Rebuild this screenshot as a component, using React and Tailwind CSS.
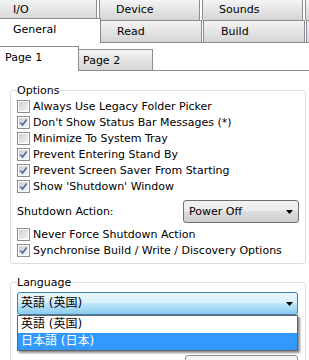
import React from 'react';

const tabGradient = 'bg-gradient-to-b from-[#f4f4f4] to-[#d5d5d5]';

const Arrow = () => (
  <svg width="7" height="4" viewBox="0 0 7 4" className="shrink-0">
    <path d="M0 0h7L3.5 4z" fill="#000" />
  </svg>
);

const Check = ({ checked }) => (
  <span className="flex h-[13px] w-[13px] shrink-0 border border-[#8e8f8f] bg-white p-[1px]">
    <span className="flex h-full w-full items-center justify-center bg-gradient-to-br from-[#cbcdd0] to-[#f7f7f7]">
      {checked && (
        <svg width="9" height="9" viewBox="0 0 9 9">
          <path d="M1.5 4.5 L3.6 7 L7.6 1.6" fill="none" stroke="#4a67ad" strokeWidth="1.6" />
        </svg>
      )}
    </span>
  </span>
);

const Row = ({ checked, children, className = '' }) => (
  <div className={`flex h-[16px] items-center gap-[3px] ${className}`}>
    <Check checked={checked} />
    <span className="whitespace-nowrap">{children}</span>
  </div>
);

const options = [
  { label: 'Always Use Legacy Folder Picker', checked: false },
  { label: "Don't Show Status Bar Messages (*)", checked: true },
  { label: 'Minimize To System Tray', checked: false },
  { label: 'Prevent Entering Stand By', checked: true },
  { label: 'Prevent Screen Saver From Starting', checked: true },
  { label: "Show 'Shutdown' Window", checked: true },
];

export default function App() {
  return (
    <div className="relative h-[360px] w-[309px] overflow-hidden bg-white font-['DejaVu_Sans','Noto_Sans_CJK_JP',sans-serif] text-[11px] leading-[13px] text-black">
      {/* back row of tabs */}
      <div className="-ml-[4px] flex h-[20px] gap-[2px]">
        {['I/O', 'Device', 'Sounds', ''].map((t, i) => (
          <div key={i} className={`h-full w-[101px] shrink-0 border-x border-[#898c95] pl-[16px] pt-[3px] ${tabGradient}`}>
            {t}
          </div>
        ))}
      </div>

      {/* front row of tabs */}
      <div className="flex h-[23px] items-start border-b border-[#898c95]">
        <div className="relative z-10 -mt-[2px] -ml-[3px] h-[25px] w-[104px] shrink-0 border-x border-t border-[#898c95] bg-white pl-[15px] pt-[4px]">
          General
        </div>
        <div className={`h-[22px] w-[101px] shrink-0 border-r border-t border-[#898c95] pl-[16px] pt-[4px] ${tabGradient}`}>
          Read
        </div>
        <div className={`ml-[1px] h-[22px] w-[102px] shrink-0 border-x border-t border-[#898c95] pl-[17px] pt-[4px] ${tabGradient}`}>
          Build
        </div>
        <div className={`ml-[1px] h-[22px] w-[102px] shrink-0 border-x border-t border-[#898c95] ${tabGradient}`} />
      </div>

      {/* page tabs */}
      <div className="flex h-[28px] items-start border-b border-[#898c95]">
        <div className="relative z-10 -ml-[2px] mt-[3px] h-[25px] w-[81px] shrink-0 border-x border-t border-[#898c95] bg-white pl-[6px] pt-[4px]">
          Page 1
        </div>
        <div className={`mt-[6px] h-[21px] w-[74px] shrink-0 border-r border-t border-[#898c95] pl-[4px] pt-[4px] ${tabGradient}`}>
          Page 2
        </div>
      </div>

      {/* Options */}
      <fieldset className="ml-[10px] mt-[13px] w-[296px] rounded-[3px] border border-[#d5dfe5] px-[6px] pb-[5px]">
        <legend className="leading-[13px]">Options</legend>
        <div className="pt-[1px]">
          {options.map((o) => (
            <Row key={o.label} checked={o.checked}>
              {o.label}
            </Row>
          ))}
          <div className="mt-[6px] flex h-[23px] items-center justify-between">
            <span>Shutdown Action:</span>
            <div className="flex h-[23px] w-[116px] items-center justify-between rounded-[3px] border border-[#707070] bg-[linear-gradient(#f2f2f2_0%,#ebebeb_50%,#dddddd_50%,#cfcfcf_100%)] pl-[5px] pr-[5px]">
              <span>Power Off</span>
              <Arrow />
            </div>
          </div>
          <Row checked={false} className="mt-[3px]">Never Force Shutdown Action</Row>
          <Row checked={true}>Synchronise Build / Write / Discovery Options</Row>
        </div>
      </fieldset>

      {/* Language */}
      <fieldset className="ml-[10px] mt-[12px] h-[120px] w-[296px] rounded-[3px] border border-[#d5dfe5] px-[6px]">
        <legend className="leading-[13px]">Language</legend>
        <div className="relative mt-[3px] w-[281px]">
          <div className="flex h-[23px] items-center justify-between rounded-[3px] border border-[#3c7fb1] bg-[linear-gradient(#eaf6fd_0%,#d9f0fc_45%,#bee6fd_50%,#8ccbee_100%)] pl-[3px] pr-[4px] text-[12px]">
            <span>英語 (英国)</span>
            <Arrow />
          </div>
          <div className="absolute left-0 top-[23px] z-20 w-[281px] border border-[#646464] bg-white text-[12px] shadow-[2px_2px_2px_rgba(0,0,0,0.45)]">
            <div className="flex h-[17px] items-center pl-[3px]">英語 (英国)</div>
            <div className="flex h-[17px] items-center bg-[#3399ff] pl-[3px] text-white">日本語 (日本)</div>
          </div>
        </div>
        <div className="mt-[40px] flex w-[281px] justify-end">
          <div className="h-[23px] w-[113px] rounded-[3px] border border-[#8e8f8f] bg-[linear-gradient(#f7f7f7_0%,#f0f0f0_50%,#e6e6e6_50%,#dcdcdc_100%)]" />
        </div>
      </fieldset>
    </div>
  );
}
